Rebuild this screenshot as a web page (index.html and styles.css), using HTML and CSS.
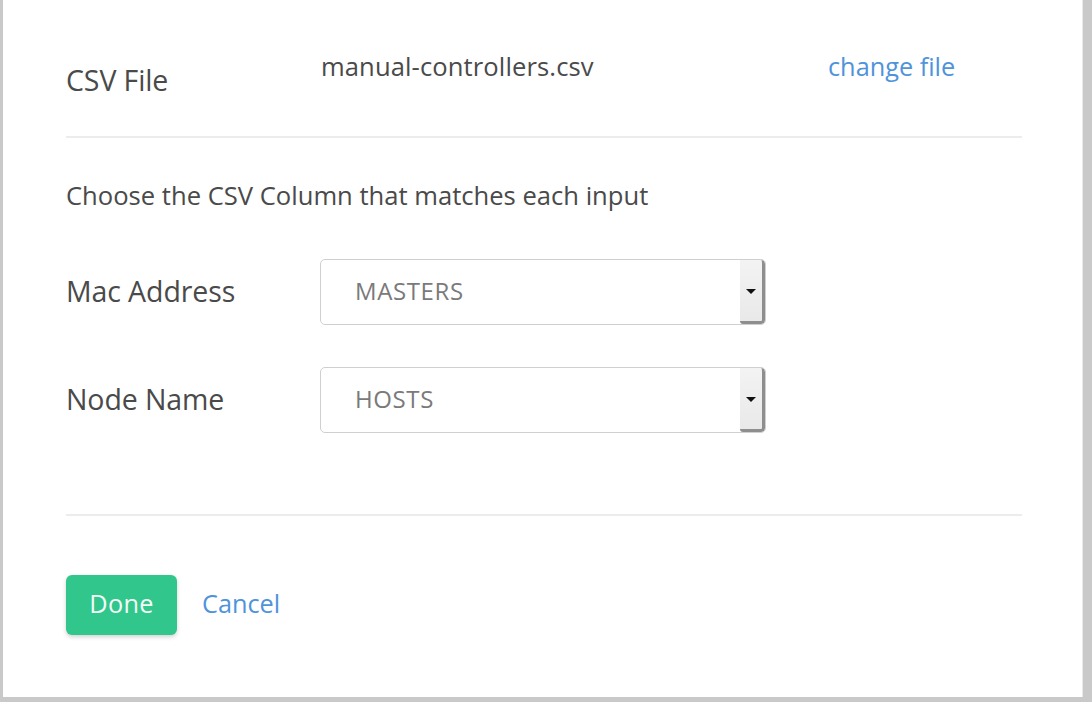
FILE: index.html
```html
<!DOCTYPE html>
<html>
<head>
<meta charset="utf-8">
<link rel="stylesheet" href="styles.css">
</head>
<body>
<div class="card">
  <div class="file-row">
    <div class="label file-label">CSV File</div>
    <div class="file-name">manual-controllers.csv</div>
    <a class="link change-link" href="#">change file</a>
  </div>
  <div class="divider first"></div>
  <p class="hint">Choose the CSV Column that matches each input</p>
  <div class="map-row">
    <div class="label">Mac Address</div>
    <div class="select">
      <span class="select-value">MASTERS</span>
      <span class="select-btn"><span class="arrow"></span></span>
    </div>
  </div>
  <div class="map-row second">
    <div class="label">Node Name</div>
    <div class="select">
      <span class="select-value">HOSTS</span>
      <span class="select-btn"><span class="arrow"></span></span>
    </div>
  </div>
  <div class="divider last"></div>
  <div class="actions">
    <button class="btn-done">Done</button>
    <a class="link cancel-link" href="#">Cancel</a>
  </div>
</div>
</body>
</html>
```
FILE: styles.css
```css
html, body {
  margin: 0;
  padding: 0;
  height: 100%;
}
body {
  background: #c9c9c9;
  font-family: "Open Sans", "Noto Sans", sans-serif;
  color: #4a4a4a;
}
.card {
  box-sizing: border-box;
  height: 697px;
  margin: 0 9px 0 3px;
  background: #fff;
  border-right: 1px solid #e9e9e9;
  padding: 49px 0 0 63px;
  width: 1080px;
}
.label {
  font-size: 28.5px;
  line-height: 40px;
  color: #4a4a4a;
  letter-spacing: -0.1px;
}
.file-row {
  display: grid;
  grid-template-columns: 255px 507px auto;
  align-items: start;
  width: 956px;
}
.file-label {
  margin-top: 11px;
}
.file-name {
  font-size: 25.6px;
  line-height: 36px;
  color: #4a4a4a;
  letter-spacing: 0.1px;
}
.link {
  color: #4f93db;
  text-decoration: none;
  font-size: 25.3px;
  line-height: 36px;
}
.change-link {
  margin-top: -1px;
}
.divider {
  width: 956px;
  height: 2px;
  background: #ececec;
}
.divider.first {
  margin-top: 36px;
}
.hint {
  margin: 40px 0 0 0;
  font-size: 25.6px;
  line-height: 36px;
  color: #4a4a4a;
}
.map-row {
  display: grid;
  grid-template-columns: 254px 446px;
  align-items: center;
  margin-top: 45px;
}
.map-row.second {
  margin-top: 42px;
}
.map-row .label {
  margin-top: -2px;
}
.select {
  box-sizing: border-box;
  height: 66px;
  border: 1px solid #cfcfcf;
  border-radius: 5px;
  display: flex;
  align-items: stretch;
  background: #fff;
  overflow: hidden;
}
.select-value {
  flex: 1;
  padding-left: 34px;
  font-size: 24px;
  letter-spacing: 0.6px;
  line-height: 36px;
  align-self: center;
  color: #7a7a7a;
  margin-top: -2px;
}
.select-btn {
  box-sizing: border-box;
  width: 25px;
  background: linear-gradient(180deg, #f3f3f3 0, #e9e9e9 100%);
  border-right: 3px solid #8e8e8e;
  border-bottom: 3px solid #8e8e8e;
  border-radius: 0 4px 4px 3px;
  display: flex;
  align-items: center;
  justify-content: center;
}
.arrow {
  width: 0;
  height: 0;
  border-left: 5px solid transparent;
  border-right: 5px solid transparent;
  border-top: 5px solid #111;
  margin-top: 1px;
}
.divider.last {
  margin-top: 81px;
}
.actions {
  display: flex;
  align-items: flex-start;
  margin-top: 59px;
}
.btn-done {
  box-sizing: border-box;
  height: 60px;
  width: 111px;
  padding: 10px 0 14px 0;
  border: none;
  border-radius: 6px;
  background: #31c68b;
  color: #f2fbf7;
  font-family: "Open Sans", "Noto Sans", sans-serif;
  font-size: 25.3px;
  line-height: 36px;
  letter-spacing: 0.3px;
  box-shadow: 0 2px 4px rgba(0, 0, 0, 0.18);
  cursor: pointer;
}
.cancel-link {
  margin-left: 25px;
  margin-top: 10px;
}
```
